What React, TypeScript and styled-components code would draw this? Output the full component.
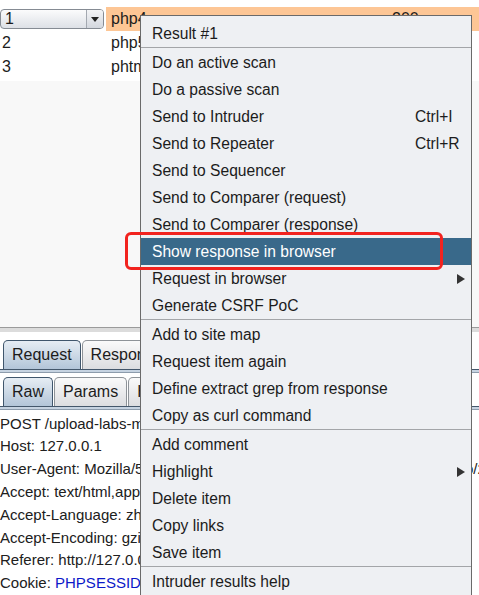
import React from 'react'
import styled, { createGlobalStyle } from 'styled-components'

const GlobalStyle = createGlobalStyle`
    html, body {
        margin: 0;
        padding: 0;
        background: #ffffff;
    }
    body {
        font-family: "Liberation Sans", Arial, sans-serif;
        font-size: 15px;
        color: #1c1c1c;
    }
`

const Screen = styled.div`
    position: relative;
    width: 479px;
    height: 595px;
    overflow: hidden;
    display: flex;
    flex-direction: column;
    background: #ffffff;
`

const ResultsTable = styled.div`
    padding-top: 7px;
    height: 75px;
    background: #ffffff;
    font-size: 16px;
`

const ResultRow = styled.div`
    display: grid;
    grid-template-columns: 106px 281px 1fr;
    height: 24px;
    align-items: center;
`

const IndexCell = styled.div`
    height: 100%;
    display: flex;
    align-items: center;
    padding-left: 2px;
`

const DataCell = styled.div<{ $selected?: boolean }>`
    height: 100%;
    display: flex;
    align-items: center;
    padding-left: 5px;
    background: ${(p) => (p.$selected ? '#fdc695' : 'transparent')};
    white-space: nowrap;
    overflow: hidden;
`

const ComboBox = styled.div`
    box-sizing: border-box;
    width: 104px;
    height: 20px;
    margin-left: -2px;
    display: flex;
    border: 1px solid #858b93;
    border-radius: 4px;
    background: linear-gradient(#fbfbfc, #dde0e6);
    overflow: hidden;
`

const ComboValue = styled.div`
    flex: 1;
    padding-left: 4px;
    line-height: 18px;
`

const ComboButton = styled.div`
    width: 16px;
    display: flex;
    align-items: center;
    justify-content: center;
    border-left: 1px solid #a3a8b0;
    background: linear-gradient(#f3f4f6, #d3d7de);
`

const EmptyPane = styled.div`
    height: 250px;
    background: #f8f8f8;
`

const SplitDivider = styled.div`
    height: 4px;
    border-top: 1px solid #9b9b9b;
    background: #dcdcdc;
    margin-bottom: 8px;
`

const TabStrip = styled.div`
    display: flex;
    padding-left: 3px;
    height: 29px;
    align-items: flex-end;
    border-bottom: 1px solid #44576b;
`

const Tab = styled.div<{ $active?: boolean }>`
    box-sizing: border-box;
    height: 29px;
    padding: 0 8px;
    margin-right: 1px;
    display: flex;
    align-items: center;
    white-space: nowrap;
    border: 1px solid ${(p) => (p.$active ? '#40566c' : '#8e9398')};
    border-bottom: none;
    border-radius: 5px 5px 0 0;
    font-size: 16px;
    background: ${(p) =>
        p.$active
            ? 'linear-gradient(#e6edf4, #b3c5d8)'
            : 'linear-gradient(#fafafa, #dcdde0)'};
`

const TabRule = styled.div<{ $gap: number }>`
    height: 2px;
    background: #c6d3e1;
    border-bottom: 1px solid #8d9cac;
    margin-bottom: ${(p) => p.$gap}px;
`

const RequestBody = styled.div`
    padding-top: 3px;
    background: #ffffff;
`

const RequestLine = styled.div`
    line-height: 22.8px;
    white-space: nowrap;
    overflow: hidden;
    color: #202020;
`

const CookieValue = styled.span`
    color: #0b18c8;
`

const ContextMenu = styled.div`
    position: absolute;
    left: 140px;
    top: 15px;
    width: 332px;
    box-sizing: border-box;
    padding-top: 4px;
    border: 1px solid #6a6a6a;
    background: #eef0f3;
    font-size: 15.6px;
    z-index: 10;
`

const MenuItem = styled.div<{ $highlighted?: boolean }>`
    height: 27px;
    display: flex;
    align-items: center;
    padding: 0 6px 0 11px;
    white-space: nowrap;
    background: ${(p) => (p.$highlighted ? '#39698a' : 'transparent')};
    color: ${(p) => (p.$highlighted ? '#ffffff' : '#1c1c1c')};
`

const ItemLabel = styled.span`
    flex: 1;
`

const Shortcut = styled.span`
    width: 50px;
    color: #1c1c1c;
`

const SubmenuArrow = styled.svg`
    width: 8px;
    height: 10px;
`

const MenuSeparator = styled.div`
    height: 1px;
    border-top: 1px solid #a3a5a8;
`

const Annotation = styled.div`
    position: absolute;
    left: 125px;
    top: 232px;
    width: 318px;
    height: 38px;
    box-sizing: border-box;
    border: 3px solid #f2231f;
    border-radius: 6px;
    z-index: 20;
`

type Entry =
    | { kind: 'item'; label: string; shortcut?: string; submenu?: boolean; highlighted?: boolean }
    | { kind: 'sep' }

const menu: Entry[] = [
    { kind: 'item', label: 'Result #1' },
    { kind: 'sep' },
    { kind: 'item', label: 'Do an active scan' },
    { kind: 'item', label: 'Do a passive scan' },
    { kind: 'item', label: 'Send to Intruder', shortcut: 'Ctrl+I' },
    { kind: 'item', label: 'Send to Repeater', shortcut: 'Ctrl+R' },
    { kind: 'item', label: 'Send to Sequencer' },
    { kind: 'item', label: 'Send to Comparer (request)' },
    { kind: 'item', label: 'Send to Comparer (response)' },
    { kind: 'item', label: 'Show response in browser', highlighted: true },
    { kind: 'item', label: 'Request in browser', submenu: true },
    { kind: 'item', label: 'Generate CSRF PoC' },
    { kind: 'sep' },
    { kind: 'item', label: 'Add to site map' },
    { kind: 'item', label: 'Request item again' },
    { kind: 'item', label: 'Define extract grep from response' },
    { kind: 'item', label: 'Copy as curl command' },
    { kind: 'sep' },
    { kind: 'item', label: 'Add comment' },
    { kind: 'item', label: 'Highlight', submenu: true },
    { kind: 'item', label: 'Delete item' },
    { kind: 'item', label: 'Copy links' },
    { kind: 'item', label: 'Save item' },
    { kind: 'sep' },
    { kind: 'item', label: 'Intruder results help' },
]

const requestLines = [
    'POST /upload-labs-master/Pass-03/index.php HTTP/1.1',
    'Host: 127.0.0.1',
    'User-Agent: Mozilla/5.0 (Windows NT 10.0; Win64; x64; rv:72.0) Gecko/20100101 Firefox/72.0',
    'Accept: text/html,application/xhtml+xml,application/xml;q=0.9,*/*;q=0.8',
    'Accept-Language: zh-CN,zh;q=0.8,zh-TW;q=0.7,zh-HK;q=0.5',
    'Accept-Encoding: gzip, deflate',
    'Referer: http://127.0.0.1/upload-labs-master/Pass-03/index.php',
]

const rows = [
    { id: '1', payload: 'php4', status: '200' },
    { id: '2', payload: 'php5', status: '200' },
    { id: '3', payload: 'phtml', status: '200' },
]

const App: React.FC = () => {
    return (
        <>
            <GlobalStyle />
            <Screen>
                <ResultsTable>
                    {rows.map((r, i) => (
                        <ResultRow key={r.id}>
                            <IndexCell>
                                {i === 0 ? (
                                    <ComboBox>
                                        <ComboValue>{r.id}</ComboValue>
                                        <ComboButton>
                                            <svg width="8" height="5" viewBox="0 0 8 5">
                                                <path d="M0 0H8L4 5Z" fill="#222" />
                                            </svg>
                                        </ComboButton>
                                    </ComboBox>
                                ) : (
                                    r.id
                                )}
                            </IndexCell>
                            <DataCell $selected={i === 0}>{r.payload}</DataCell>
                            <DataCell $selected={i === 0}>{r.status}</DataCell>
                        </ResultRow>
                    ))}
                </ResultsTable>
                <EmptyPane />
                <SplitDivider />
                <TabStrip>
                    <Tab $active>Request</Tab>
                    <Tab>Response</Tab>
                </TabStrip>
                <TabRule $gap={4} />
                <TabStrip>
                    <Tab $active>Raw</Tab>
                    <Tab>Params</Tab>
                    <Tab>Headers</Tab>
                    <Tab>Hex</Tab>
                </TabStrip>
                <TabRule $gap={0} />
                <RequestBody>
                    {requestLines.map((l) => (
                        <RequestLine key={l}>{l}</RequestLine>
                    ))}
                    <RequestLine>
                        Cookie: <CookieValue>PHPSESSID=2kq8d0v1f4r6o3u7s9a5m1e2c0</CookieValue>
                    </RequestLine>
                </RequestBody>

                <ContextMenu>
                    {menu.map((e, i) =>
                        e.kind === 'sep' ? (
                            <MenuSeparator key={i} />
                        ) : (
                            <MenuItem key={i} $highlighted={e.highlighted}>
                                <ItemLabel>{e.label}</ItemLabel>
                                {e.shortcut && <Shortcut>{e.shortcut}</Shortcut>}
                                {e.submenu && (
                                    <SubmenuArrow viewBox="0 0 8 10">
                                        <path d="M0 0L8 5L0 10Z" fill="#333" />
                                    </SubmenuArrow>
                                )}
                            </MenuItem>
                        )
                    )}
                </ContextMenu>
                <Annotation />
            </Screen>
        </>
    )
}

export default App
